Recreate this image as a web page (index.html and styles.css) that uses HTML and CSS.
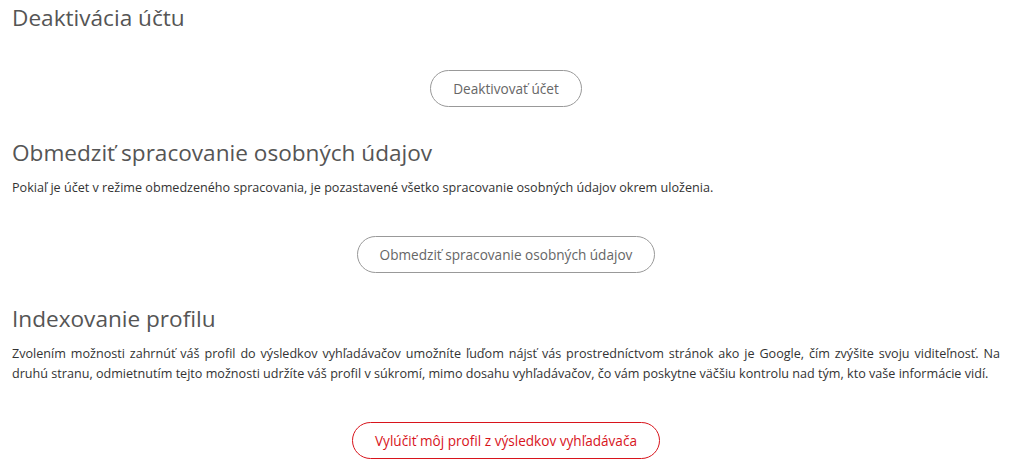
FILE: index.html
```html
<!DOCTYPE html>
<html lang="sk">

<head>
    <meta charset="UTF-8">
    <meta name="viewport" content="width=device-width, initial-scale=1.0">
    <title>Nastavenia účtu</title>
    <link rel="stylesheet" href="styles.css">
</head>

<body>
    <div class="settings">
        <section class="setting">
            <h2>Deaktivácia účtu</h2>
            <div class="actions">
                <button class="btn">Deaktivovať účet</button>
            </div>
        </section>

        <section class="setting">
            <h2>Obmedziť spracovanie osobných údajov</h2>
            <p>Pokiaľ je účet v režime obmedzeného spracovania, je pozastavené všetko spracovanie osobných údajov okrem uloženia.</p>
            <div class="actions">
                <button class="btn">Obmedziť spracovanie osobných údajov</button>
            </div>
        </section>

        <section class="setting">
            <h2>Indexovanie profilu</h2>
            <p>Zvolením možnosti zahrnúť váš profil do výsledkov vyhľadávačov umožníte ľuďom nájsť vás prostredníctvom stránok ako je Google, čím zvýšite svoju viditeľnosť. Na druhú stranu, odmietnutím tejto možnosti udržíte váš profil v súkromí, mimo dosahu vyhľadávačov, čo vám poskytne väčšiu kontrolu nad tým, kto vaše informácie vidí.</p>
            <div class="actions">
                <button class="btn btn_danger">Vylúčiť môj profil z výsledkov vyhľadávača</button>
            </div>
        </section>
    </div>
</body>

</html>
```

FILE: styles.css
```css
body {
    font-family: "Open Sans", Arial, sans-serif;
    background-color: #fff;
    color: #333;
    margin: 0;
}

.settings {
    padding: 3px 14px 0 12px;
}

.setting h2 {
    font-size: 22.6px;
    font-weight: 400;
    line-height: 29px;
    color: #555;
    margin: 0 0 11px;
}

.setting p {
    font-size: 12.6px;
    line-height: 20px;
    text-align: justify;
    margin: 0;
}

.actions {
    display: flex;
    justify-content: center;
    padding: 38px 0 31px;
}

.setting h2 + .actions {
    padding-top: 27px;
}

.btn {
    font-family: inherit;
    font-size: 13.6px;
    line-height: 20px;
    padding: 7.5px 22px;
    color: #666;
    background-color: #fff;
    border: 1px solid #999;
    border-radius: 19px;
    cursor: pointer;
}

.btn:hover {
    background-color: #f4f4f4;
}

.btn_danger {
    color: #d8141c;
    border-color: #d8141c;
}
```
